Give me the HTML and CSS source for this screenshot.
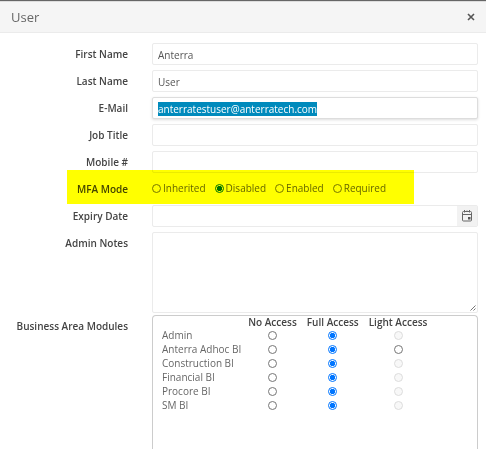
FILE: index.html
```html
<!DOCTYPE html>
<html lang="en">
<head>
    <meta charset="UTF-8">
    <meta name="viewport" content="width=device-width, initial-scale=1.0">
    <title>User</title>
    <link rel="stylesheet" href="styles.css">
</head>
<body>
    <div class="window">
        <header class="titlebar">
            <h1>User</h1>
            <button type="button" class="close" aria-label="Close">
                <svg width="8" height="8" viewBox="0 0 8 8"><path d="M1 1l6 6M7 1L1 7" stroke="#555" stroke-width="1.6" fill="none"/></svg>
            </button>
        </header>

        <form class="form">
            <div class="row">
                <label class="label" for="first-name">First Name</label>
                <input class="field" type="text" id="first-name" value="Anterra">
            </div>
            <div class="row">
                <label class="label" for="last-name">Last Name</label>
                <input class="field" type="text" id="last-name" value="User">
            </div>
            <div class="row">
                <label class="label" for="email">E-Mail</label>
                <input class="field" type="text" id="email" value="anterratestuser@anterratech.com" spellcheck="false">
            </div>
            <div class="row">
                <label class="label" for="job-title">Job Title</label>
                <input class="field" type="text" id="job-title">
            </div>
            <div class="row">
                <label class="label" for="mobile">Mobile #</label>
                <input class="field" type="text" id="mobile">
            </div>
            <div class="row marked" role="radiogroup" aria-labelledby="mfa-label">
                <span class="label" id="mfa-label">MFA Mode</span>
                <div class="options">
                    <label><input type="radio" name="mfa">Inherited</label>
                    <label><input type="radio" name="mfa" checked>Disabled</label>
                    <label><input type="radio" name="mfa">Enabled</label>
                    <label><input type="radio" name="mfa">Required</label>
                </div>
            </div>
            <div class="row">
                <label class="label" for="expiry">Expiry Date</label>
                <div class="picker">
                    <input type="text" id="expiry">
                    <button type="button" aria-label="Open calendar">
                        <svg width="12" height="12" viewBox="0 0 12 12" fill="none" stroke="#666">
                            <rect x="1.5" y="1.5" width="9" height="9.5" rx="1"/>
                            <path d="M1.5 4.5h9"/>
                            <path d="M3.5 0v2.5M8.5 0v2.5M6 0.5v1"/>
                            <path d="M7 7h2.5v2.5H7z" fill="#555" stroke="none"/>
                        </svg>
                    </button>
                </div>
            </div>
            <div class="row">
                <label class="label" for="notes">Admin Notes</label>
                <div class="notes">
                    <textarea class="field" id="notes"></textarea>
                    <svg class="grip" width="6" height="6" viewBox="0 0 6 6"><path d="M0.5 5.5l5-5M3.5 5.5l2-2" stroke="#777" stroke-width="1"/></svg>
                </div>
            </div>
            <div class="row modules">
                <span class="label" id="modules-label">Business Area Modules</span>
                <div class="panel">
                    <table aria-labelledby="modules-label">
                        <thead>
                            <tr><td></td><th scope="col">No Access</th><th scope="col">Full Access</th><th scope="col">Light Access</th></tr>
                        </thead>
                        <tbody>
                            <tr>
                                <th scope="row">Admin</th>
                                <td><input type="radio" name="admin" aria-label="No Access"></td>
                                <td><input type="radio" name="admin" aria-label="Full Access" checked></td>
                                <td><input type="radio" name="admin" aria-label="Light Access" disabled></td>
                            </tr>
                            <tr>
                                <th scope="row">Anterra Adhoc BI</th>
                                <td><input type="radio" name="adhoc" aria-label="No Access"></td>
                                <td><input type="radio" name="adhoc" aria-label="Full Access" checked></td>
                                <td><input type="radio" name="adhoc" aria-label="Light Access"></td>
                            </tr>
                            <tr>
                                <th scope="row">Construction BI</th>
                                <td><input type="radio" name="construction" aria-label="No Access"></td>
                                <td><input type="radio" name="construction" aria-label="Full Access" checked></td>
                                <td><input type="radio" name="construction" aria-label="Light Access" disabled></td>
                            </tr>
                            <tr>
                                <th scope="row">Financial BI</th>
                                <td><input type="radio" name="financial" aria-label="No Access"></td>
                                <td><input type="radio" name="financial" aria-label="Full Access" checked></td>
                                <td><input type="radio" name="financial" aria-label="Light Access" disabled></td>
                            </tr>
                            <tr>
                                <th scope="row">Procore BI</th>
                                <td><input type="radio" name="procore" aria-label="No Access"></td>
                                <td><input type="radio" name="procore" aria-label="Full Access" checked></td>
                                <td><input type="radio" name="procore" aria-label="Light Access" disabled></td>
                            </tr>
                            <tr>
                                <th scope="row">SM BI</th>
                                <td><input type="radio" name="sm" aria-label="No Access"></td>
                                <td><input type="radio" name="sm" aria-label="Full Access" checked></td>
                                <td><input type="radio" name="sm" aria-label="Light Access" disabled></td>
                            </tr>
                        </tbody>
                    </table>
                </div>
            </div>
        </form>
    </div>

    <script>
        // open with the e-mail ready to be replaced
        const email = document.getElementById('email');
        email.focus();
        email.select();
    </script>
</body>
</html>
```
FILE: styles.css
```css
* {
    box-sizing: border-box;
}
body {
    margin: 0;
    background: #fff;
    color: #666;
    font-family: "Open Sans", sans-serif;
    font-size: 10px;
    line-height: 14px;
}
.window {
    display: flex;
    flex-direction: column;
    height: 100vh;
    border-top: 1px solid #666;
    overflow: hidden;
}
.titlebar {
    display: flex;
    flex: none;
    align-items: center;
    justify-content: space-between;
    height: 32px;
    padding: 0 11px;
    background: #f5f5f5;
    border-top: 1px solid #ddd;
    border-bottom: 1px solid #ebebeb;
}
.titlebar h1 {
    margin: 0;
    font-size: 13px;
    font-weight: 400;
    line-height: 18px;
}
button {
    display: flex;
    align-items: center;
    justify-content: center;
    padding: 0;
    border: 0;
    background: none;
}
.form {
    display: flex;
    flex: 1;
    flex-direction: column;
    gap: 5px;
    padding: 10px 8px 0 0;
}
.row {
    display: grid;
    grid-template-columns: 128px 1fr;
    column-gap: 24px;
    flex: none;
}
.label {
    padding-top: 4px;
    color: #444;
    font-weight: 600;
    text-align: right;
}
.field,
.picker {
    width: 100%;
    height: 22px;
    border: 1px solid #ebebeb;
    border-radius: 2px;
    background: #fff;
}
.field,
.picker input {
    padding: 1px 5px 0;
    color: #555;
    font: inherit;
    outline: none;
}
.field:focus {
    border-color: #ddd;
    box-shadow: 0 1px 3px #ddd;
}
.field::selection {
    background: #008abc;
    color: #fff;
}

/* yellow marker over the MFA row */
.marked {
    position: relative;
    height: 22px;
}
.marked::after {
    content: "";
    position: absolute;
    top: -8px;
    bottom: -4px;
    left: 67px;
    width: 347px;
    background: #ff0;
    mix-blend-mode: multiply;
    pointer-events: none;
}
.options {
    display: flex;
    align-items: center;
    gap: 9px;
    padding-bottom: 2px;
}
.options label {
    display: flex;
    align-items: center;
    gap: 2px;
}

input[type="radio"] {
    appearance: none;
    width: 9px;
    height: 9px;
    margin: 0;
    border: 1px solid #767676;
    border-radius: 50%;
    background: #fff;
}
input[type="radio"]:checked {
    border-color: #0075ff;
    background: radial-gradient(circle, #0075ff 50%, #fff 60%);
}
input[type="radio"]:disabled {
    border-color: #ddd;
    background: #f8f8f8;
}

.picker {
    display: flex;
}
.picker input {
    flex: 1;
    min-width: 0;
    border: 0;
    background: none;
}
.picker button {
    width: 20px;
    background: #f2f2f2;
}
.notes {
    position: relative;
    height: 81px;
}
.notes .field {
    display: block;
    height: 100%;
    padding: 4px 5px;
    resize: none;
}
.grip {
    position: absolute;
    right: 2px;
    bottom: 2px;
}

.modules {
    flex: 1;
    margin-top: -3px;
}
.panel {
    min-height: 136px;
    border: 1px solid #ccc;
    border-bottom: 0;
    border-radius: 4px 4px 0 0;
    padding: 0 9px;
}
table {
    border-collapse: collapse;
}
th,
td {
    height: 14px;
    padding: 0 5px;
    line-height: 14px;
    text-align: center;
    white-space: nowrap;
}
thead th,
thead td {
    height: 12px;
    color: #444;
    font-weight: 600;
    line-height: 12px;
}
tbody th {
    padding: 0 2px 0 0;
    font-weight: 400;
    text-align: left;
}
td input[type="radio"] {
    display: block;
    margin: 0 auto;
}
```
